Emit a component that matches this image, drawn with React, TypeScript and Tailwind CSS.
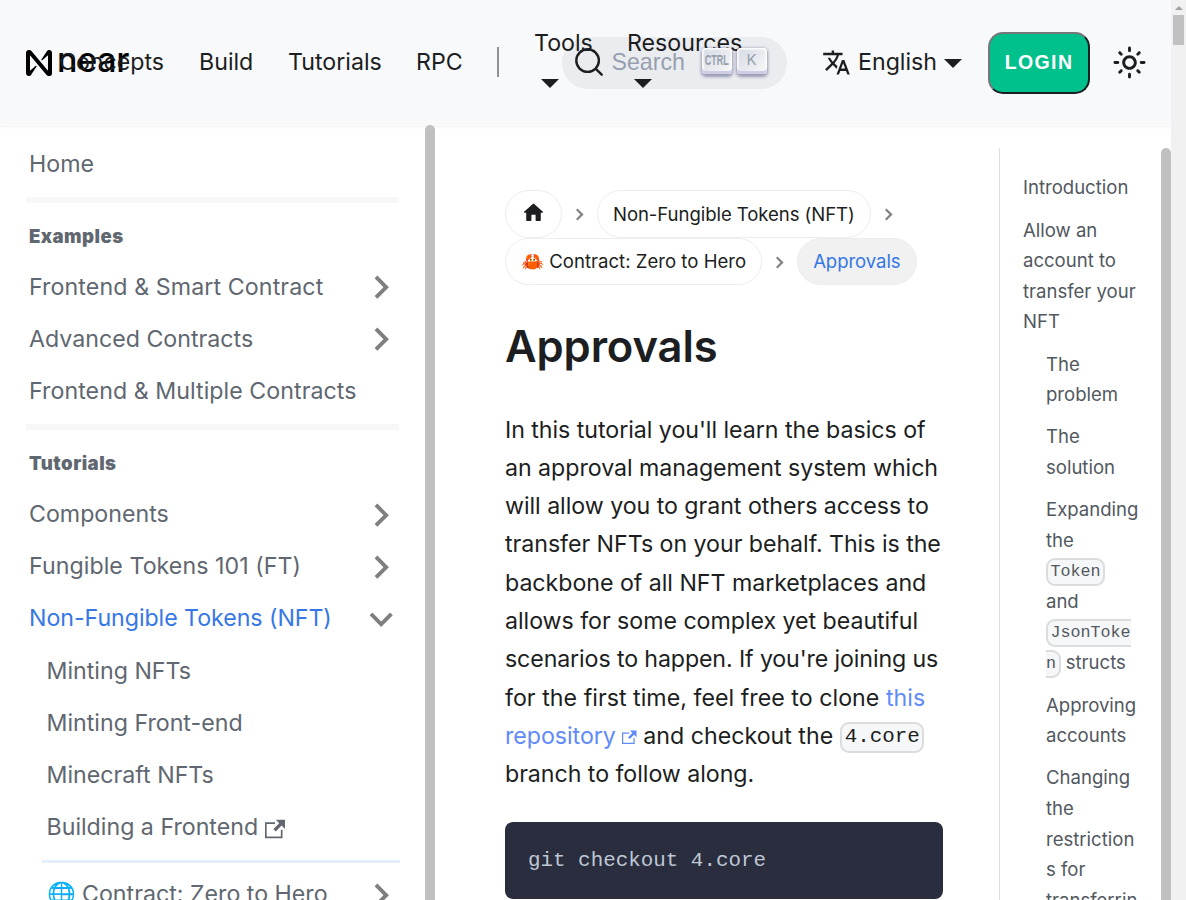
import React from "react";

const INTER = "font-['Inter',sans-serif]";
const MONO = "font-['Liberation_Mono',monospace]";

function Caret({ className = "" }: { className?: string }) {
  return (
    <svg viewBox="0 0 18 9" className={`h-[9px] w-[18px] shrink-0 fill-[#1c1e21] ${className}`}>
      <path d="M0 0h18L9 9z" />
    </svg>
  );
}

function Chevron({ className = "" }: { className?: string }) {
  return (
    <svg viewBox="0 0 24 24" className={`shrink-0 fill-[#7f7f7f] ${className}`}>
      <path d="M7.41 15.41L12 10.83l4.59 4.58L18 14l-6-6-6 6z" />
    </svg>
  );
}

function ExternalIcon({ className = "" }: { className?: string }) {
  return (
    <svg viewBox="0 0 24 24" className={`inline fill-current ${className}`}>
      <path d="M21 13v10h-21v-19h12v2h-10v15h17v-8h2zm3-12h-10.988l4.035 4-6.977 7.07 2.828 2.828 6.977-7.07 4.125 4.172v-11z" />
    </svg>
  );
}

function Key({ children }: { children: React.ReactNode }) {
  return (
    <span className="flex h-[26px] w-[30px] items-center justify-center rounded-[4px] bg-linear-[-225deg,#d5dbe4,#f8f8f8] text-[#969faf] shadow-[inset_0_-3px_0_0_#cdcde6,inset_0_0_1.5px_1.5px_#fff,0_1.5px_3px_1px_rgba(30,35,90,0.4)]">
      {children}
    </span>
  );
}

function Header() {
  return (
    <header className="relative z-10 flex h-[126px] shrink-0 items-center bg-[#f8f9fb] pl-[26px] text-[23.2px] leading-[38px] text-[#1c1e21] shadow-[0_1px_2px_0_rgba(0,0,0,0.06)]">
      <div className="flex w-[536px] shrink-0 items-center">
        <a className="flex w-[33px] shrink-0 items-center overflow-visible">
          <svg viewBox="0 0 90 90" className="mb-px h-[26px] w-[26px] shrink-0 fill-black">
            <path d="M72.2,4.6L53.4,32.5c-1.3,1.9,1.2,4.2,3,2.6L74.9,19c0.5-0.4,1.2-0.1,1.2,0.6v50.3c0,0.7-0.9,1-1.3,0.5l-56-67C17,1.2,14.4,0,11.5,0h-2C4.3,0,0,4.3,0,9.6v70.8C0,85.7,4.3,90,9.6,90c3.3,0,6.4-1.7,8.2-4.6l18.8-27.9c1.3-1.9-1.2-4.2-3-2.6l-18.5,16c-0.5,0.4-1.2,0.1-1.2-0.6V20.1c0-0.7,0.9-1,1.3-0.5l56,67c1.8,2.2,4.5,3.4,7.3,3.4h2c5.3,0,9.6-4.3,9.6-9.6V9.6c0-5.3-4.3-9.6-9.6-9.6C77.1,0,74,1.7,72.2,4.6z" />
          </svg>
          <span className="ml-[5px] pb-[6px] text-[34px] font-medium tracking-[-0.3px] text-black">near</span>
        </a>
        <nav className="flex shrink-0 items-center">
          <a className="w-[140px] shrink-0 pb-[2px]">Concepts</a>
          <a className="w-[89px] shrink-0 pb-[2px]">Build</a>
          <a className="w-[128px] shrink-0 pb-[2px]">Tutorials</a>
          <a className="w-[81px] shrink-0 pb-[2px]">RPC</a>
          <span className="mb-[2px] h-[30px] w-[2px] shrink-0 bg-[#8f9195]" />
          <a className="ml-[35px] flex w-[93px] shrink-0 flex-col pb-[14px]">
            Tools
            <Caret className="mt-[17px] ml-[7px]" />
          </a>
          <a className="flex w-[115px] shrink-0 flex-col pb-[14px]">
            Resources
            <Caret className="mt-[17px] ml-[7px]" />
          </a>
        </nav>
      </div>
      <button className="flex h-[52px] w-[225px] shrink-0 items-center rounded-full bg-[rgba(12,12,40,0.055)] pb-[2px] pl-[12px]">
        <svg viewBox="0 0 20 20" className="h-[30px] w-[30px] shrink-0 fill-none stroke-[#1c1e21] stroke-[1.6]">
          <path d="M14.386 14.386l4.0877 4.0877-4.0877-4.0877c-2.9418 2.9419-7.7115 2.9419-10.6533 0-2.9419-2.9418-2.9419-7.7115 0-10.6533 2.9418-2.9419 7.7115-2.9419 10.6533 0 2.9419 2.9418 2.9419 7.7115 0 10.6533z" strokeLinecap="round" strokeLinejoin="round" />
        </svg>
        <span className="ml-[7.5px] w-[90px] text-left font-['Liberation_Sans',sans-serif] text-[23.2px] text-[#969faf]">Search</span>
        <span className="flex gap-[5px] pb-[2px]">
          <Key>
            <span className="scale-x-[0.58] pb-[2px] font-['Liberation_Sans',sans-serif] text-[15.5px] leading-none font-bold">CTRL</span>
          </Key>
          <Key>
            <span className="pb-[3px] text-[15px] leading-none">K</span>
          </Key>
        </span>
      </button>
      <a className="ml-[35px] flex w-[166px] shrink-0 items-center pb-[2px]">
        <svg viewBox="0 0 24 24" className="h-[29px] w-[29px] fill-[#1c1e21]">
          <path d="M12.87 15.07l-2.54-2.51.03-.03c1.74-1.94 2.98-4.17 3.71-6.53H17V4h-7V2H8v2H1v1.99h11.17C11.5 7.92 10.44 9.75 9 11.35 8.07 10.32 7.3 9.19 6.69 8h-2c.73 1.63 1.73 3.17 2.98 4.56l-5.09 5.02L4 19l5-5 3.11 3.11.76-2.04zM18.5 10h-2L12 22h2l1.12-3h4.75L21 22h2l-4.5-12zm-2.62 7l1.62-4.33L19.12 17h-3.24z" />
        </svg>
        <span className="ml-[7px] w-[86px]">English</span>
        <Caret className="mt-[2px]" />
      </a>
      <button className="flex h-[62px] w-[102px] shrink-0 items-center justify-center rounded-[15px] border-2 border-t-[#767778] border-r-[#1c1e21] border-b-[#1c1e21] border-l-[#767778] bg-[#00c08b] pb-[2px] font-['Liberation_Sans',sans-serif] text-[19.5px] font-bold tracking-[1.4px] text-white">
        LOGIN
      </button>
      <svg viewBox="0 0 24 24" className="mb-[2px] ml-[22px] h-[35px] w-[35px] shrink-0 fill-[#1c1e21]">
        <path d="M12,9c1.65,0,3,1.35,3,3s-1.35,3-3,3s-3-1.35-3-3S10.35,9,12,9 M12,7c-2.76,0-5,2.24-5,5s2.24,5,5,5s5-2.24,5-5 S14.76,7,12,7L12,7z M2,13l2,0c0.55,0,1-0.45,1-1s-0.45-1-1-1l-2,0c-0.55,0-1,0.45-1,1S1.45,13,2,13z M20,13l2,0c0.55,0,1-0.45,1-1 s-0.45-1-1-1l-2,0c-0.55,0-1,0.45-1,1S19.45,13,20,13z M11,2v2c0,0.55,0.45,1,1,1s1-0.45,1-1V2c0-0.55-0.45-1-1-1S11,1.45,11,2z M11,20v2c0,0.55,0.45,1,1,1s1-0.45,1-1v-2c0-0.55-0.45-1-1-1C11.45,19,11,19.45,11,20z M5.99,4.58c-0.39-0.39-1.03-0.39-1.41,0 c-0.39,0.39-0.39,1.03,0,1.41l1.06,1.06c0.39,0.39,1.03,0.39,1.41,0s0.39-1.03,0-1.41L5.99,4.58z M18.36,16.95 c-0.39-0.39-1.03-0.39-1.41,0c-0.39,0.39-0.39,1.03,0,1.41l1.06,1.06c0.39,0.39,1.03,0.39,1.41,0c0.39-0.39,0.39-1.03,0-1.41 L18.36,16.95z M19.42,5.99c0.39-0.39,0.39-1.03,0-1.41c-0.39-0.39-1.03-0.39-1.41,0l-1.06,1.06c-0.39,0.39-0.39,1.03,0,1.41 s1.03,0.39,1.41,0L19.42,5.99z M7.05,18.36c0.39-0.39,0.39-1.03,0-1.41c-0.39-0.39-1.03-0.39-1.41,0l-1.06,1.06 c-0.39,0.39-0.39,1.03,0,1.41s1.03,0.39,1.41,0L7.05,18.36z" />
      </svg>
    </header>
  );
}

type ItemProps = { children: React.ReactNode; caret?: "right" | "down"; active?: boolean; sub?: boolean };

function Item({ children, caret, active, sub }: ItemProps) {
  return (
    <li className={`flex h-[52.15px] shrink-0 items-center justify-between pr-[20.5px] whitespace-nowrap ${sub ? "pl-[46.5px]" : "pl-[29px]"} ${active ? "text-[#3578e5]" : "text-[#606770]"}`}>
      <span>{children}</span>
      {caret && <Chevron className={`h-[46.4px] w-[46.4px] ${caret === "right" ? "rotate-90" : "rotate-180"}`} />}
    </li>
  );
}

function Divider() {
  return <li className="mt-[6.5px] mr-[26px] ml-[26px] h-[6px] shrink-0 bg-[#f7f7f7]" />;
}

function Heading({ children }: { children: React.ReactNode }) {
  return <li className="h-[58.4px] shrink-0 pt-[18px] pl-[29px] text-[18.6px] leading-[30px] font-black tracking-[0.45px] text-[#606770]">{children}</li>;
}

function Sidebar() {
  return (
    <aside className="flex w-[435px] shrink-0">
      <ul className="flex h-full w-[425px] flex-col overflow-hidden pt-[12.3px] text-[23.2px] leading-[29px]">
        <Item>Home</Item>
        <Divider />
        <Heading>Examples</Heading>
        <Item caret="right"><span className="tracking-[0.1px]">Frontend &amp; Smart Contract</span></Item>
        <Item caret="right">Advanced Contracts</Item>
        <Item><span className="tracking-[0.05px]">Frontend &amp; Multiple Contracts</span></Item>
        <Divider />
        <Heading>Tutorials</Heading>
        <Item caret="right">Components</Item>
        <Item caret="right"><span className="tracking-[0.05px]">Fungible Tokens 101 (FT)</span></Item>
        <Item caret="down" active><span className="tracking-[-0.05px]">Non-Fungible Tokens (NFT)</span></Item>
        <Item sub>Minting NFTs</Item>
        <Item sub>Minting Front-end</Item>
        <Item sub>Minecraft NFTs</Item>
        <Item sub>
          Building a Frontend <ExternalIcon className="h-[20px] w-[20px]" />
        </Item>
        <li className="mt-[6.1px] mb-[6px] ml-[42px] h-[3px] w-[358px] shrink-0 bg-[#e5f0fa]" />
        <Item sub caret="right">🌐 Contract: Zero to Hero</Item>
      </ul>
      <div className="z-20 -mt-px h-[800px] w-[10px] rounded-full bg-[#c0c0c0]" />
    </aside>
  );
}

const pill = "flex h-[47.5px] items-center rounded-full border border-[#ebedf0] px-[15px] pt-[1.8px] whitespace-nowrap";

function Separator() {
  return (
    <span className="flex w-[35px] items-center justify-center pt-[2px]">
      <Chevron className="h-[23px] w-[23px] rotate-90 stroke-[#7f7f7f] stroke-[0.4]" />
    </span>
  );
}

function Breadcrumbs() {
  return (
    <div className="text-[18.56px] tracking-[-0.06px]">
      <div className="flex items-center">
        <span className={pill}>
          <svg viewBox="0 0 24 24" className="mb-[3.5px] h-[25.5px] w-[25px] fill-[#1c1e21]">
            <path d="M10 19v-5h4v5c0 .55.45 1 1 1h3c.55 0 1-.45 1-1v-7h1.7c.46 0 .68-.57.33-.87L12.67 3.6c-.38-.34-.96-.34-1.34 0l-8.36 7.53c-.34.3-.13.87.33.87H5v7c0 .55.45 1 1 1h3c.55 0 1-.45 1-1z" />
          </svg>
        </span>
        <Separator />
        <span className={pill}>Non-Fungible Tokens (NFT)</span>
        <Separator />
      </div>
      <div className="flex items-center">
        <span className={`${pill} tracking-[0.02px]`}>🦀 Contract: Zero to Hero</span>
        <Separator />
        <span className={`${pill} bg-[#f1f1f1] text-[#3578e5]`}>Approvals</span>
      </div>
    </div>
  );
}

function Article() {
  return (
    <main className="w-[564px] shrink-0 pt-[64px] pl-[70px] text-[#1c1e21]">
      <Breadcrumbs />
      <h1 className="mt-[31.6px] text-[43.5px] leading-[58px] font-semibold tracking-[-0.1px]">Approvals</h1>
      <p className="mt-[36px] text-[23.2px] leading-[38.3px] tracking-[-0.04px] whitespace-nowrap">
        In this tutorial you'll learn the basics of<br />
        an approval management system which<br />
        will allow you to grant others access to<br />
        transfer NFTs on your behalf. This is the<br />
        backbone of all NFT marketplaces and<br />
        allows for some complex yet beautiful<br />
        <span className="tracking-[-0.12px]">scenarios to happen. If you're joining us</span><br />
        <span className="tracking-[0.03px]">for the first time, feel free to clone <span className="text-[#5f8afa]">this</span></span><br />
        <span className="text-[#5f8afa]">
          repository <ExternalIcon className="h-[14.5px] w-[14.5px]" />
        </span>{" "}
        <span className="tracking-normal">and checkout the </span>
        <code className={`${MONO} ml-[0.5px] rounded-[9px] border-2 border-[#dadcde] bg-[#f6f7f8] px-[2.5px] pt-[1px] pb-[3px] align-middle text-[20.88px] leading-none tracking-normal`}>4.core</code><br />
        branch to follow along.
      </p>
      <pre className={`${MONO} mt-[28px] h-[77px] w-[438px] rounded-[8px] bg-[#292d3e] pt-[24px] pl-[23px] text-[20.88px] leading-[30px] text-[#bfc7d5]`}>git checkout 4.core</pre>
    </main>
  );
}

const tocCode = `${MONO} rounded-[9px] border-2 border-[#dadcde] bg-[#f6f7f8] px-[2.5px] pt-[2px] pb-[3px] align-middle text-[16.7px] leading-none`;

function Toc() {
  return (
    <aside className="mt-[22px] flex w-[172px] shrink-0 border-l border-[#dadde1]">
      <ul className="flex w-[161px] flex-col gap-[11.6px] pt-[24.3px] pl-[23px] text-[18.56px] leading-[30.63px] whitespace-nowrap text-[#525860]">
        <li>Introduction</li>
        <li>Allow an<br />account to<br />transfer your<br />NFT</li>
        <li className="pl-[23px]">The<br />problem</li>
        <li className="pl-[23px]">The<br />solution</li>
        <li className="pl-[23px]">
          Expanding<br />the<br />
          <code className={tocCode}>Token</code><br />
          and<br />
          <code className={tocCode}>JsonToke<br />n</code> structs
        </li>
        <li className="pl-[23px]">Approving<br />accounts</li>
        <li className="pl-[23px]">Changing<br />the<br />restriction<br />s for<br />transferrin</li>
      </ul>
      <div className="h-[800px] w-[10px] rounded-full bg-[#c0c0c0]" />
    </aside>
  );
}

export default function App() {
  return (
    <div className={`${INTER} flex h-[900px] w-[1186px] overflow-hidden bg-white antialiased`}>
      <div className="flex h-full w-[1171px] shrink-0 flex-col overflow-hidden">
        <Header />
        <div className="flex min-h-0 flex-1">
          <Sidebar />
          <Article />
          <Toc />
        </div>
      </div>
      <div className="flex w-[15px] shrink-0 flex-col items-center bg-[#f1f1f1]">
        <svg viewBox="0 0 8 4" className="mt-[6px] h-[4px] w-[8px] fill-[#a3a3a3]">
          <path d="M0 4l4-4 4 4z" />
        </svg>
        <div className="mt-[5px] h-[30px] w-[11px] bg-[#c1c1c1]" />
      </div>
    </div>
  );
}
